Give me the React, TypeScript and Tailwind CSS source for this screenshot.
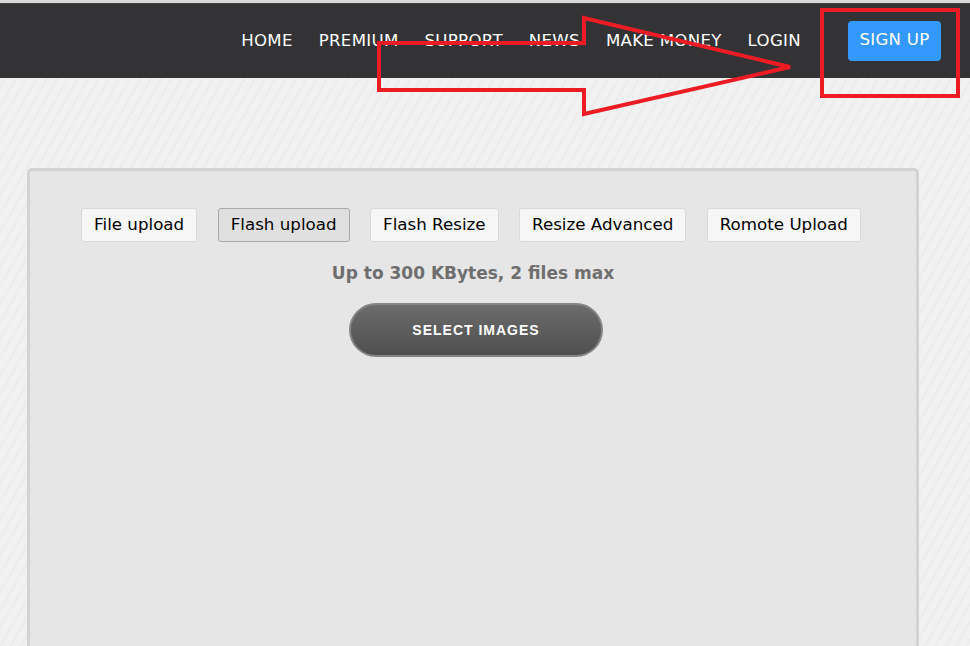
const navItems = ['HOME', 'PREMIUM', 'SUPPORT', 'NEWS', 'MAKE MONEY', 'LOGIN'];

const tabs = [
  { label: 'File upload', active: false },
  { label: 'Flash upload', active: true },
  { label: 'Flash Resize', active: false },
  { label: 'Resize Advanced', active: false },
  { label: 'Romote Upload', active: false },
];

const Header = () => (
  <div className="w-full">
    <div className="h-[3px] bg-[#d8d8d8]" />
    <div className="h-[75px] bg-[#333335] border-t border-[#3e3e40] flex items-center justify-end pr-[29px]">
      <nav className="flex items-center gap-[26px] text-white text-[16.6px] font-['DejaVu_Sans',sans-serif] pt-[1px]">
        {navItems.map((item) => (
          <a key={item} href="#" className="tracking-[0.3px]">
            {item}
          </a>
        ))}
      </nav>
      <a
        href="#"
        className="ml-[47px] h-[40px] w-[93px] mb-[1px] flex items-center justify-center rounded-[4px] bg-[#3399ff] text-white text-[16.6px] tracking-[0.3px] font-['DejaVu_Sans',sans-serif]"
      >
        SIGN UP
      </a>
    </div>
  </div>
);

const Annotations = () => (
  <svg className="absolute left-0 top-0 pointer-events-none" width="970" height="646" viewBox="0 0 970 646">
    <polygon
      points="379,43 584,43 584,18 790,67 584,114 584,90 379,90"
      fill="none"
      stroke="#ed1c24"
      strokeWidth="4"
    />
    <rect x="822" y="10" width="136" height="86" fill="none" stroke="#ed1c24" strokeWidth="4" />
  </svg>
);

export default function App() {
  return (
    <div className="relative w-[970px] h-[646px] overflow-hidden bg-[#f0f0f0] bg-[repeating-linear-gradient(120deg,#f1f1f1_0px,#f1f1f1_7px,#ececec_7px,#ececec_9px)]">
      <Header />
      <main className="pt-[90px] pl-[27px]">
        <section className="w-[892px] h-[520px] bg-[#e6e6e6] border-[3px] border-b-0 border-[#d3d3d3] rounded-t-[5px] pt-[37px] flex flex-col items-center">
          <div className="flex items-center gap-[20.5px] ml-[-4px] font-['DejaVu_Sans',sans-serif] text-[16.7px] text-black">
            {tabs.map((t) => (
              <button
                key={t.label}
                className={
                  t.active
                    ? 'h-[34px] px-[12px] rounded-[3px] border border-[#a9a9a9] bg-[#e0e0e0]'
                    : 'h-[34px] px-[12px] rounded-[3px] border border-[#d9d9d9] bg-[#f6f6f6]'
                }
              >
                {t.label}
              </button>
            ))}
          </div>
          <p className="mt-[20px] leading-[22px] font-['DejaVu_Sans',sans-serif] font-bold text-[17px] text-[#6e6e6e]">
            Up to 300 KBytes, 2 files max
          </p>
          <button className="mt-[19px] ml-[6px] w-[254px] h-[54px] rounded-full border-2 border-[#858585] bg-[linear-gradient(#6c6c6c,#4f4f4f)] text-white font-['Liberation_Sans',sans-serif] font-bold text-[14px] tracking-[1px]">
            SELECT IMAGES
          </button>
        </section>
      </main>
      <Annotations />
    </div>
  );
}
